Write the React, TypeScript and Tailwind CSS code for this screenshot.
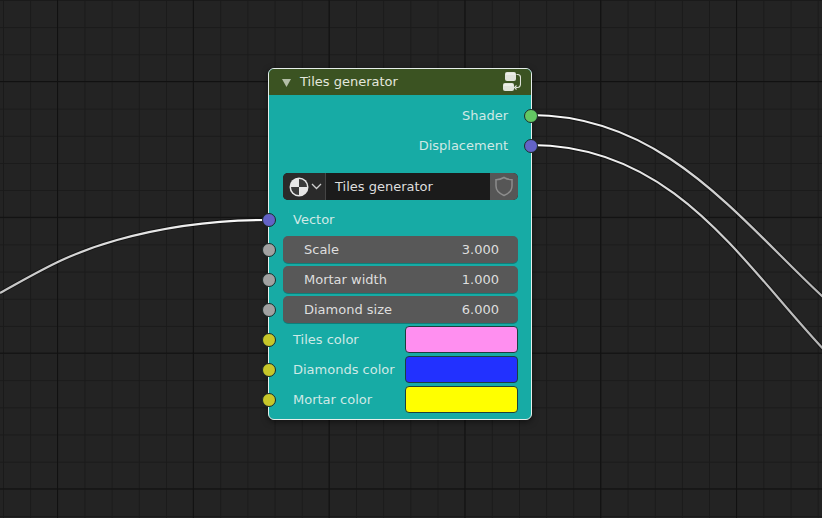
const font = { fontFamily: '"DejaVu Sans", sans-serif' };

type Props = { color?: string; side?: "in" | "out" };

// Little round socket sitting on the node edge
const Socket = ({ color, side = "in" }: Props) => (
  <span
    className={`absolute top-[calc(50%+0.5px)] size-[14px] -translate-y-1/2 rounded-full border border-[#1c2b2a] ${
      side === "in" ? "-left-[7px]" : "-right-[7px]"
    }`}
    style={{ backgroundColor: color }}
  />
);

const Slider = ({ label, value }: { label: string; value: string }) => (
  <div className="relative flex h-[30px] items-center pl-[14px] pr-[13px]">
    <Socket color="#a1a1a1" />
    <div className="flex h-[27px] w-full items-center justify-between rounded-[5px] bg-[#585858] pl-[21px] pr-[19px] text-[#dedede] shadow-[0_1px_0_#0d7f7a]">
      <span className="mt-[2px]">{label}</span>
      <span className="mt-[2px]">{value}</span>
    </div>
  </div>
);

const ColorRow = ({ label, swatch }: { label: string; swatch: string }) => (
  <div className="relative flex h-[30px] items-center justify-between pl-[24px] pr-[13px]">
    <Socket color="#c7c729" />
    <span className="mt-[2px]">{label}</span>
    <div className="h-[27px] w-[113px] rounded-[4px] border border-[#1d3f3d]" style={{ backgroundColor: swatch }} />
  </div>
);

const Output = ({ label, color }: { label: string; color: string }) => (
  <div className="relative flex h-[30px] items-center justify-end pr-[23px]">
    <span className="mt-[2px]">{label}</span>
    <Socket color={color} side="out" />
  </div>
);

const Wires = () => (
  <svg className="absolute inset-0" width="822" height="518" fill="none">
    <defs>
      <linearGradient id="right" x1="531" x2="822" y1="0" y2="0" gradientUnits="userSpaceOnUse">
        <stop offset="0" stopColor="#ffffff" />
        <stop offset="1" stopColor="#b4b4b4" />
      </linearGradient>
      <linearGradient id="left" x1="268" x2="0" y1="0" y2="0" gradientUnits="userSpaceOnUse">
        <stop offset="0" stopColor="#ffffff" />
        <stop offset="1" stopColor="#c4c4c4" />
      </linearGradient>
    </defs>
    {["M531 115C749 115 811 395 1029 395", "M531 145C763 145 797 455 1029 455"].map((d) => (
      <g key={d}>
        <path d={d} stroke="#000" strokeOpacity=".45" strokeWidth="4" />
        <path d={d} stroke="url(#right)" strokeWidth="2.200" />
      </g>
    ))}
    <path d="M268 220C215 220 167 226 117 240S40 271 0 293" stroke="#000" strokeOpacity=".45" strokeWidth="4" />
    <path d="M268 220C215 220 167 226 117 240S40 271 0 293" stroke="url(#left)" strokeWidth="2.200" />
  </svg>
);

export default function App() {
  return (
    <div
      className="relative h-[518px] w-[822px] overflow-hidden bg-[#232323] bg-[linear-gradient(#111111_1px,transparent_1px),linear-gradient(90deg,#111111_1px,transparent_1px),linear-gradient(#1a1a1a_1px,transparent_1px),linear-gradient(90deg,#1a1a1a_1px,transparent_1px)] [background-position:0_81px,57px_0,0_0,3px_0] [background-size:135.8px_135.8px,135.8px_135.8px,27.16px_27.16px,27.16px_27.16px]"
      style={font}
    >
      <Wires />

      {/* Node */}
      <div className="absolute left-[268px] top-[68px] h-[352px] w-[264px] rounded-[6px] border border-[#e6eeea] bg-[#17aba5] text-[13px] text-[#cfe9e6] shadow-[0_2px_6px_rgba(0,0,0,0.5)]">
        <div className="flex h-[26px] items-center rounded-t-[5px] bg-[#3b5322] pl-[13px] pr-[10px] text-[#e3e7dd]">
          <svg width="9" height="8" viewBox="0 0 9 8" className="mt-[2px]">
            <path d="M0 0h9L4.500 8z" fill="#b4bfa8" />
          </svg>
          <span className="mb-[1px] ml-[9px] flex-1">Tiles generator</span>
          <svg width="20" height="22" viewBox="0 0 20 22" fill="none">
            <rect x="4" y="1" width="11" height="9" rx="2" fill="#dfe3da" />
            <rect x="2" y="12" width="11" height="8" rx="2" fill="#dfe3da" />
            <path d="M5 3h9M3 14h9" stroke="#f7f8f5" />
            <path d="M15.500 3.500h1c2 0 3 1 3 3v6c0 3-1 4-3 4h-2" stroke="#dfe3da" strokeWidth="1.100" />
            <path d="M15.500 14.500l-2 2 2 2" stroke="#dfe3da" strokeWidth="1.100" />
          </svg>
        </div>

        <div className="pt-[5px]">
          <Output label="Shader" color="#63c763" />
          <Output label="Displacement" color="#6363c7" />

          {/* Node group selector */}
          <div className="ml-[14px] mr-[13px] mt-[13px] flex h-[27px] overflow-hidden rounded-[5px] bg-[#1b1b1b] text-[#dedede]">
            <div className="flex w-[43px] items-center gap-[2px] border-r border-[#454545] bg-[#2a2a2a] pl-[6px]">
              <svg width="20" height="20" viewBox="0 0 20 20">
                <circle cx="10" cy="10" r="9.500" fill="#e6e6e6" />
                <path d="M10 10V2a8 8 0 0 1 8 8zM10 10v8a8 8 0 0 1-8-8z" fill="#3a3a3a" />
              </svg>
              <svg width="11" height="7" viewBox="0 0 11 7" fill="none">
                <path d="M1 1l4.500 4.500L10 1" stroke="#cfcfcf" strokeWidth="1.300" />
              </svg>
            </div>
            <span className="flex flex-1 items-center pl-[9px]">Tiles generator</span>
            <div className="flex w-[28px] items-center justify-center bg-[#565656]">
              <svg width="20" height="21" viewBox="0 0 20 21" fill="none">
                <path d="M10 1.500c2.300 1.400 5 2.200 8 2.200v6.300c0 4.300-3.300 7.500-8 9.500-4.700-2-8-5.200-8-9.500V3.700c3 0 5.700-.8 8-2.200z" stroke="#8c8c8c" strokeWidth="1.500" />
              </svg>
            </div>
          </div>

          <div className="relative mt-[4px] flex h-[30px] items-center pl-[24px]">
            <Socket color="#6363c7" />
            <span className="mt-[2px]">Vector</span>
          </div>
          <Slider label="Scale" value="3.000" />
          <Slider label="Mortar width" value="1.000" />
          <Slider label="Diamond size" value="6.000" />
          <ColorRow label="Tiles color" swatch="#ff8ff0" />
          <ColorRow label="Diamonds color" swatch="#2231ff" />
          <ColorRow label="Mortar color" swatch="#ffff00" />
        </div>
      </div>
    </div>
  );
}
